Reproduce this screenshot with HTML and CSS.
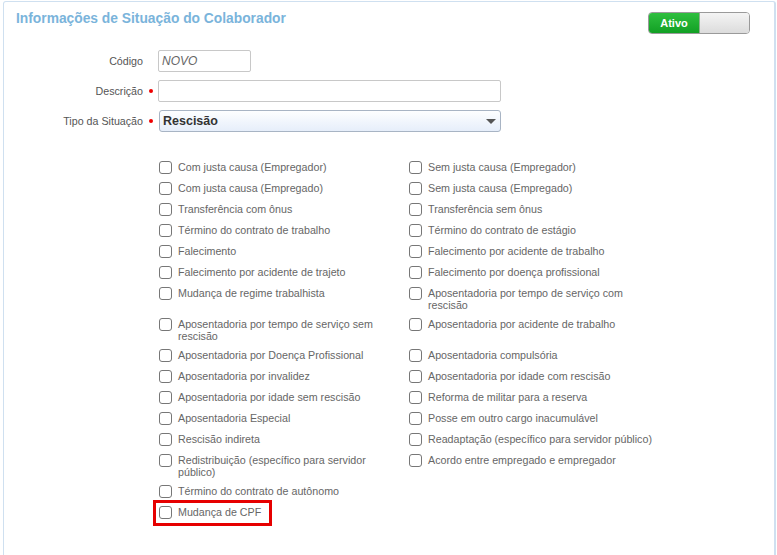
FILE: index.html
```html
<!DOCTYPE html>
<html lang="pt-BR">
<head>
    <meta charset="UTF-8">
    <title>Informações de Situação do Colaborador</title>
    <link rel="stylesheet" href="styles.css">
</head>
<body>
    <div class="panel">
        <div class="panel-header">
            <h1>Informações de Situação do Colaborador</h1>
            <div class="switch">
                <span class="switch-on">Ativo</span>
                <span class="switch-off"></span>
            </div>
        </div>

        <div class="form">
            <div class="form-row">
                <label class="form-label">Código</label>
                <span class="mark"></span>
                <div class="input input-code">NOVO</div>
            </div>
            <div class="form-row">
                <label class="form-label">Descrição</label>
                <span class="mark required"></span>
                <div class="input input-wide"></div>
            </div>
            <div class="form-row">
                <label class="form-label">Tipo da Situação</label>
                <span class="mark required"></span>
                <div class="select">
                    <span>Rescisão</span>
                    <span class="caret"></span>
                </div>
            </div>
        </div>

        <div class="options">
            <div class="option"><span class="box"></span><span class="text">Com justa causa (Empregador)</span></div>
            <div class="option"><span class="box"></span><span class="text">Sem justa causa (Empregador)</span></div>
            <div class="option"><span class="box"></span><span class="text">Com justa causa (Empregado)</span></div>
            <div class="option"><span class="box"></span><span class="text">Sem justa causa (Empregado)</span></div>
            <div class="option"><span class="box"></span><span class="text">Transferência com ônus</span></div>
            <div class="option"><span class="box"></span><span class="text">Transferência sem ônus</span></div>
            <div class="option"><span class="box"></span><span class="text">Término do contrato de trabalho</span></div>
            <div class="option"><span class="box"></span><span class="text">Término do contrato de estágio</span></div>
            <div class="option"><span class="box"></span><span class="text">Falecimento</span></div>
            <div class="option"><span class="box"></span><span class="text">Falecimento por acidente de trabalho</span></div>
            <div class="option"><span class="box"></span><span class="text">Falecimento por acidente de trajeto</span></div>
            <div class="option"><span class="box"></span><span class="text">Falecimento por doença profissional</span></div>
            <div class="option"><span class="box"></span><span class="text">Mudança de regime trabalhista</span></div>
            <div class="option"><span class="box"></span><span class="text">Aposentadoria por tempo de serviço com rescisão</span></div>
            <div class="option"><span class="box"></span><span class="text">Aposentadoria por tempo de serviço sem rescisão</span></div>
            <div class="option"><span class="box"></span><span class="text">Aposentadoria por acidente de trabalho</span></div>
            <div class="option"><span class="box"></span><span class="text">Aposentadoria por Doença Profissional</span></div>
            <div class="option"><span class="box"></span><span class="text">Aposentadoria compulsória</span></div>
            <div class="option"><span class="box"></span><span class="text">Aposentadoria por invalidez</span></div>
            <div class="option"><span class="box"></span><span class="text">Aposentadoria por idade com rescisão</span></div>
            <div class="option"><span class="box"></span><span class="text">Aposentadoria por idade sem rescisão</span></div>
            <div class="option"><span class="box"></span><span class="text">Reforma de militar para a reserva</span></div>
            <div class="option"><span class="box"></span><span class="text">Aposentadoria Especial</span></div>
            <div class="option"><span class="box"></span><span class="text">Posse em outro cargo inacumulável</span></div>
            <div class="option"><span class="box"></span><span class="text">Rescisão indireta</span></div>
            <div class="option"><span class="box"></span><span class="text">Readaptação (específico para servidor público)</span></div>
            <div class="option"><span class="box"></span><span class="text">Redistribuição (específico para servidor público)</span></div>
            <div class="option"><span class="box"></span><span class="text">Acordo entre empregado e empregador</span></div>
            <div class="option"><span class="box"></span><span class="text">Término do contrato de autônomo</span></div>
            <div class="option-empty"></div>
            <div class="option marked"><span class="box"></span><span class="text">Mudança de CPF</span></div>
        </div>
    </div>
</body>
</html>
```

FILE: styles.css
```css
* {
    margin: 0;
    padding: 0;
    box-sizing: border-box;
    font-family: 'Liberation Sans', Arial, sans-serif;
}

body {
    background: #fff;
    width: 777px;
    height: 555px;
    overflow: hidden;
}

.panel {
    margin: 1px 0 0 3px;
    width: 773px;
    height: 554px;
    border: 1px solid #cfe0f0;
    border-right-width: 2px;
    border-bottom: none;
    border-radius: 3px 3px 0 0;
}

.panel-header {
    display: flex;
    justify-content: space-between;
    align-items: flex-start;
    padding: 9px 24px 0 12px;
}

.panel-header h1 {
    font-size: 13.8px;
    line-height: 16px;
    font-weight: bold;
    color: #7ab4db;
}

.switch {
    display: flex;
    width: 102px;
    height: 22px;
    margin-top: 1px;
    border-radius: 4px;
    overflow: hidden;
    border: 1px solid #9a9a9a;
}

.switch-on {
    width: 51px;
    background: linear-gradient(#2fbf3f, #12a024);
    color: #fff;
    font-size: 11px;
    font-weight: bold;
    line-height: 20px;
    text-align: center;
    border-right: 1px solid #8fb08f;
}

.switch-off {
    flex: 1;
    background: linear-gradient(#f4f4f4, #dcdcdc);
}

.form {
    margin-top: 16px;
}

.form-row {
    display: flex;
    align-items: center;
    height: 22px;
    margin-bottom: 8px;
}

.form-label {
    width: 139px;
    text-align: right;
    font-size: 10.7px;
    color: #555;
}

.mark {
    width: 15px;
    display: flex;
    justify-content: center;
}

.mark.required::before {
    content: '';
    width: 4px;
    height: 4px;
    border-radius: 50%;
    background: #e00;
    margin-left: 1px;
}

.input {
    height: 22px;
    border: 1px solid #c8c8c8;
    border-radius: 2px;
    background: #fff;
}

.input-code {
    width: 93px;
    padding-left: 3px;
    font-size: 12px;
    font-style: italic;
    line-height: 20px;
    color: #666;
}

.input-wide {
    width: 343px;
}

.select {
    display: flex;
    align-items: center;
    justify-content: space-between;
    width: 342px;
    height: 22px;
    margin-left: 1px;
    padding: 0 4px 0 3px;
    border: 1px solid #a8b4c4;
    border-radius: 3px;
    background: linear-gradient(#fdfeff, #e6eefa);
    font-size: 12.5px;
    font-weight: bold;
    color: #333;
}

.caret {
    width: 0;
    height: 0;
    border-left: 5px solid transparent;
    border-right: 5px solid transparent;
    border-top: 5px solid #555;
    margin-top: 1px;
}

.options {
    display: grid;
    grid-template-columns: 250px 250px;
    margin: 26px 0 0 155px;
}

.option {
    display: flex;
    align-items: flex-start;
    gap: 6px;
    min-height: 21px;
    padding: 3px 0 4px;
    position: relative;
}

.box {
    flex: none;
    width: 13px;
    height: 13px;
    border: 1px solid #777;
    border-radius: 3px;
    background: #fff;
}

.text {
    width: 226px;
    font-size: 10.7px;
    line-height: 12px;
    color: #666;
}

.option.marked {
    justify-self: start;
}

.option.marked .text {
    width: auto;
}

.option.marked::after {
    content: '';
    position: absolute;
    top: -3px;
    left: -6px;
    right: -11px;
    bottom: -2px;
    border: 3px solid #e60000;
}
```
